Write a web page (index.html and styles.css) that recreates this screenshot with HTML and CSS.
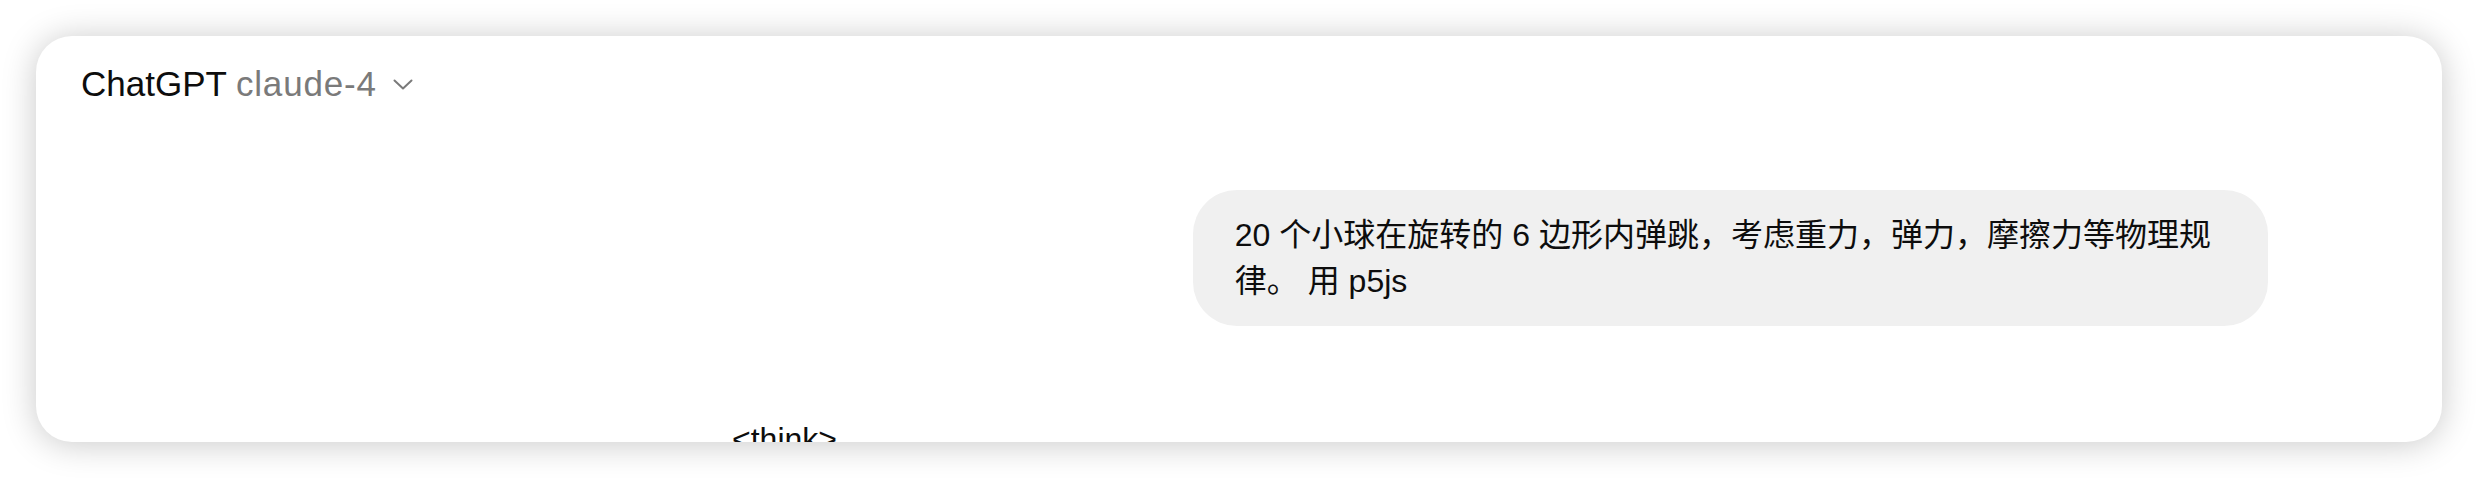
FILE: index.html
```html
<!DOCTYPE html>
<html lang="zh-CN">
<head>
<meta charset="utf-8">
<title>ChatGPT claude-4</title>
<link rel="stylesheet" href="styles.css">
</head>
<body>
<div class="card">
  <header class="top">
    <span class="brand">ChatGPT <span class="model">claude-4</span></span>
    <svg class="chev" width="20" height="11" viewBox="0 0 20 11" aria-hidden="true">
      <path d="M1.5 1.5 L10 9.5 L18.5 1.5" fill="none" stroke="#7a7a7a" stroke-width="2" stroke-linecap="round" stroke-linejoin="round"/>
    </svg>
  </header>
  <main class="thread">
    <div class="user-row">
      <div class="bubble">20 个小球在旋转的 6 边形内弹跳，考虑重力，弹力，摩擦力等物理规律。 用 p5js</div>
    </div>
    <div class="assistant">&lt;think&gt;</div>
  </main>
</div>
</body>
</html>
```

FILE: styles.css
```css
* { box-sizing: border-box; }

html, body {
  margin: 0;
  background: #ffffff;
}

body {
  padding: 36px;
  height: 478px;
  font-family: "Liberation Sans", "Noto Sans CJK SC", sans-serif;
  color: #0d0d0d;
}

.card {
  height: 406px;
  background: #ffffff;
  border-radius: 36px;
  box-shadow: 0 2px 34px rgba(0, 0, 0, 0.22);
  overflow: hidden;
}

.top {
  display: flex;
  align-items: center;
  padding: 28px 45px 0;
}

.brand {
  font-size: 35px;
  line-height: 40px;
  color: #0d0d0d;
  white-space: nowrap;
}

.model {
  color: #7a7a7a;
  letter-spacing: 0.8px;
}

.chev {
  margin-left: 16px;
  margin-top: 1px;
  flex: none;
}

.thread {
  padding: 0 174px 0 696px;
  margin-top: 86px;
  font-size: 32px;
  line-height: 46px;
}

.user-row {
  display: flex;
  justify-content: flex-end;
}

.bubble {
  max-width: 70%;
  background: #f0f0f0;
  border-radius: 44px;
  padding: 22px 42px;
  color: #0d0d0d;
}

.assistant {
  margin-top: 90px;
  color: #0d0d0d;
}
```
